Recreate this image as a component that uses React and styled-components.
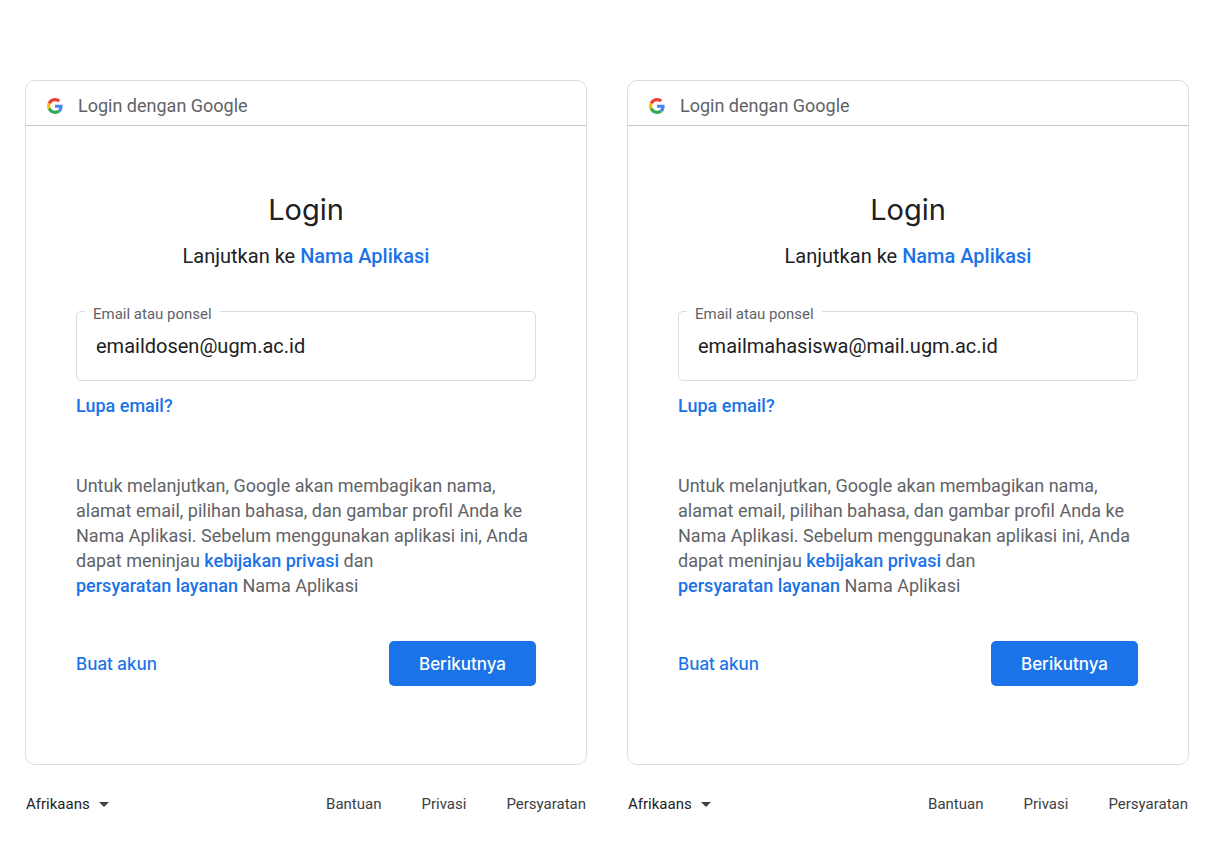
import React, { useId } from "react";
import styled, { createGlobalStyle } from "styled-components";

const GlobalStyle = createGlobalStyle`
  * { box-sizing: border-box; }
  body {
    margin: 0;
    background: #fff;
    color: #202124;
    font-family: Roboto, "Liberation Sans", sans-serif;
  }
`;

const Page = styled.main`
  display: grid;
  grid-template-columns: repeat(auto-fit, minmax(440px, 1fr));
  gap: 40px;
  padding: 80px 29px 24px 25px;
`;

const Panel = styled.div`
  display: flex;
  flex-direction: column;
  gap: 29px;
`;

const Card = styled.section`
  border: 1px solid #dadce0;
  border-radius: 10px;
`;

const CardHeader = styled.header`
  display: flex;
  align-items: center;
  gap: 15px;
  height: 45px;
  padding: 5px 21px 0;
  border-bottom: 1px solid #c4c6c9;
  color: #5f6368;
  font-size: 18px;
  line-height: 24px;
`;

const Logo = styled.svg`
  width: 16px;
  height: 16px;
  flex: none;
`;

const LoginForm = styled.form`
  padding: 64px 50px 78px;
`;

const Title = styled.h1`
  margin: 0;
  font-family: Inter, Roboto, sans-serif;
  font-size: 29px;
  font-weight: 400;
  line-height: 40px;
  text-align: center;
`;

const Subtitle = styled.p`
  margin: 12px 0 0;
  font-size: 20px;
  line-height: 28px;
  text-align: center;
`;

const TextLink = styled.a`
  color: #1a73e8;
  font-weight: 500;
  text-decoration: none;
  white-space: nowrap;
`;

const Field = styled.div`
  position: relative;
  margin-top: 41px;
`;

const FieldLabel = styled.label`
  position: absolute;
  top: -7px;
  left: 9px;
  padding: 0 8px;
  background: #fff;
  color: #5f6368;
  font-size: 15px;
  line-height: 20px;
`;

const FieldInput = styled.input`
  display: block;
  width: 100%;
  height: 70px;
  padding: 0 19px;
  border: 1px solid #dadce0;
  border-radius: 5px;
  background: #fff;
  color: #202124;
  font: 400 20px Roboto, "Liberation Sans", sans-serif;
`;

const ForgotRow = styled.p`
  margin: 13px 0 0;
  font-size: 18px;
  line-height: 24px;
`;

const Notice = styled.p`
  margin: 55px 0 0;
  color: #5f6368;
  font-size: 18px;
  line-height: 25px;
`;

const Actions = styled.div`
  display: flex;
  align-items: center;
  justify-content: space-between;
  margin-top: 43px;
`;

const CreateLink = styled(TextLink)`
  font-family: Inter, Roboto, sans-serif;
  font-size: 17px;
`;

const NextButton = styled.button`
  height: 45px;
  padding: 0 30px;
  border: 0;
  border-radius: 5px;
  background: #1a73e8;
  color: #fff;
  font: 500 17px Inter, Roboto, sans-serif;
  cursor: pointer;
`;

const Footer = styled.footer`
  display: flex;
  align-items: center;
  justify-content: space-between;
  font-size: 15px;
  line-height: 20px;
`;

const LanguagePicker = styled.div`
  display: flex;
  align-items: center;
`;

const LanguageSelect = styled.select`
  appearance: none;
  margin: 0 -19px 0 0;
  padding: 0 28px 0 1px;
  border: 0;
  background: transparent;
  color: #202124;
  font: 400 15px/20px Roboto, "Liberation Sans", sans-serif;
`;

const Arrow = styled.svg`
  width: 10px;
  height: 5px;
  pointer-events: none;
`;

const FooterLinks = styled.nav`
  display: flex;
  gap: 40px;
  padding-right: 1px;
`;

const FooterLink = styled.a`
  color: #3c4043;
  text-decoration: none;
`;

function GoogleLogo() {
  return (
    <Logo viewBox="0 0 48 48" aria-hidden="true">
      <path fill="#EA4335" d="M24 9.5c3.54 0 6.71 1.22 9.21 3.6l6.85-6.85C35.9 2.38 30.47 0 24 0 14.62 0 6.51 5.38 2.56 13.22l7.98 6.19C12.43 13.72 17.74 9.5 24 9.5z" />
      <path fill="#4285F4" d="M46.98 24.55c0-1.57-.15-3.09-.38-4.55H24v9.02h12.94c-.58 2.96-2.26 5.48-4.78 7.18l7.73 6c4.51-4.18 7.09-10.36 7.09-17.65z" />
      <path fill="#FBBC05" d="M10.53 28.59c-.48-1.45-.76-2.99-.76-4.59s.27-3.14.76-4.59l-7.98-6.19C.92 16.46 0 20.12 0 24c0 3.88.92 7.54 2.56 10.78l7.97-6.19z" />
      <path fill="#34A853" d="M24 48c6.48 0 11.93-2.13 15.89-5.81l-7.73-6c-2.15 1.45-4.92 2.3-8.16 2.3-6.26 0-11.57-4.22-13.47-9.91l-7.98 6.19C6.51 42.62 14.62 48 24 48z" />
    </Logo>
  );
}

function LoginPanel({ email }) {
  const emailId = useId();
  return (
    <Panel>
      <Card>
        <CardHeader>
          <GoogleLogo />
          <span>Login dengan Google</span>
        </CardHeader>
        <LoginForm onSubmit={(event) => event.preventDefault()}>
          <Title>Login</Title>
          <Subtitle>
            Lanjutkan ke <TextLink href="#aplikasi">Nama Aplikasi</TextLink>
          </Subtitle>
          <Field>
            <FieldInput id={emailId} type="text" defaultValue={email} spellCheck={false} />
            <FieldLabel htmlFor={emailId}>Email atau ponsel</FieldLabel>
          </Field>
          <ForgotRow>
            <TextLink href="#lupa">Lupa email?</TextLink>
          </ForgotRow>
          <Notice>
            Untuk melanjutkan, Google akan membagikan nama, alamat email, pilihan
            bahasa, dan gambar profil Anda ke Nama Aplikasi. Sebelum menggunakan
            aplikasi ini, Anda dapat meninjau{" "}
            <TextLink href="#kebijakan">kebijakan privasi</TextLink> dan{" "}
            <TextLink href="#layanan">persyaratan layanan</TextLink> Nama Aplikasi
          </Notice>
          <Actions>
            <CreateLink href="#buat">Buat akun</CreateLink>
            <NextButton type="submit">Berikutnya</NextButton>
          </Actions>
        </LoginForm>
      </Card>
      <Footer>
        <LanguagePicker>
          <LanguageSelect aria-label="Bahasa" defaultValue="af">
            <option value="af">Afrikaans</option>
          </LanguageSelect>
          <Arrow viewBox="0 0 10 5" aria-hidden="true">
            <path d="M0 0h10L5 5z" fill="#3c4043" />
          </Arrow>
        </LanguagePicker>
        <FooterLinks>
          <FooterLink href="#bantuan">Bantuan</FooterLink>
          <FooterLink href="#privasi">Privasi</FooterLink>
          <FooterLink href="#persyaratan">Persyaratan</FooterLink>
        </FooterLinks>
      </Footer>
    </Panel>
  );
}

export default function App() {
  return (
    <>
      <GlobalStyle />
      <Page>
        <LoginPanel email="emaildosen@ugm.ac.id" />
        <LoginPanel email="emailmahasiswa@mail.ugm.ac.id" />
      </Page>
    </>
  );
}
